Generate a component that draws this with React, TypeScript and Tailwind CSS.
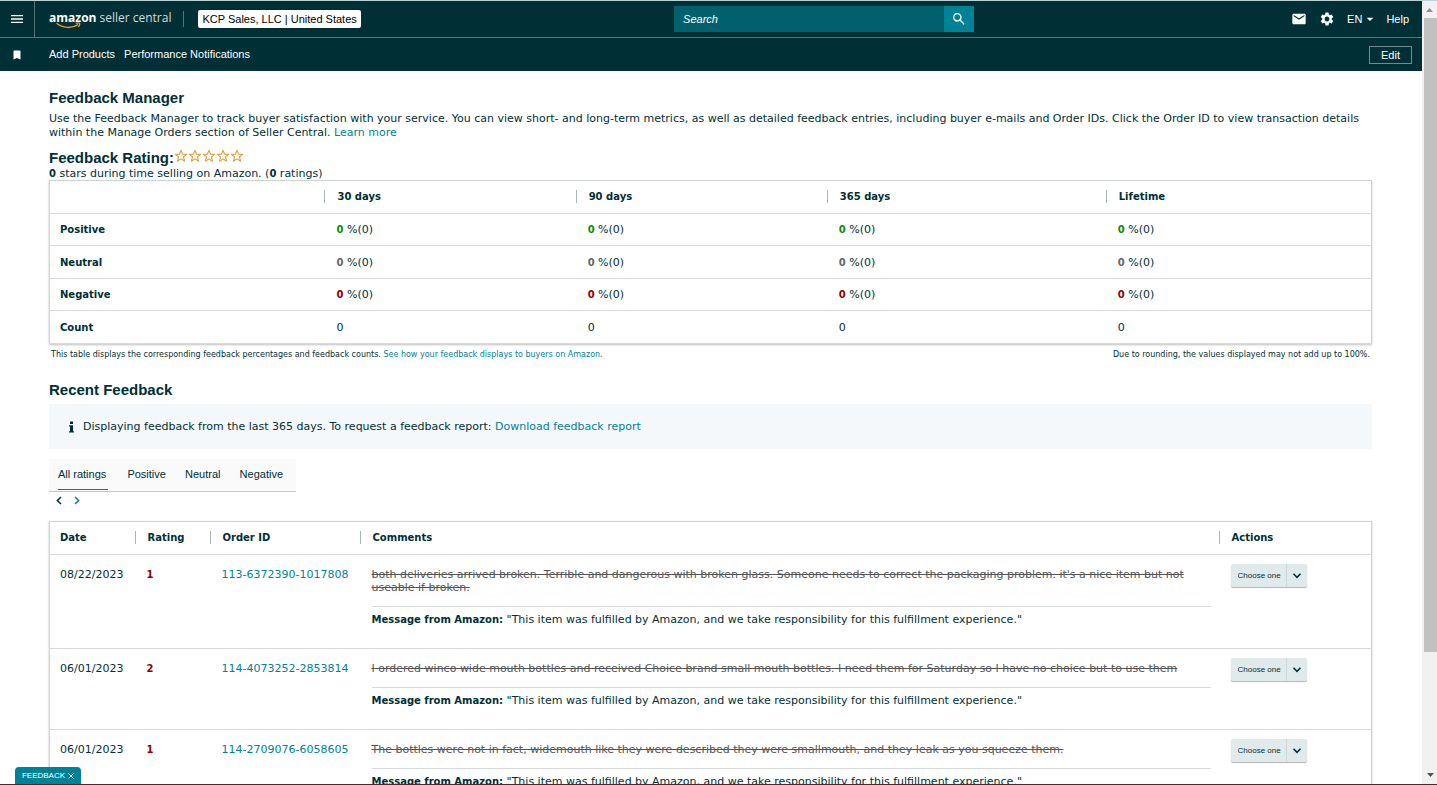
import { MdArrowDropDown, MdBookmark, MdEmail, MdMenu, MdSearch, MdSettings } from "react-icons/md";


type RatingRow = {
    label: string;
    color?: string;
};

type FeedbackEntry = {
    id: string;
    date: string;
    rating: number;
    comment: string;
};


const periods = ["30 days", "90 days", "365 days", "Lifetime"];

const ratingRows: RatingRow[] = [
    { label: "Positive", color: "text-[#0a8a0a]" },
    { label: "Neutral", color: "text-[#666666]" },
    { label: "Negative", color: "text-[#900000]" },
    { label: "Count" },
];

const tabs = ["All ratings", "Positive", "Neutral", "Negative"];

const entries: FeedbackEntry[] = [
    {
        id: "113-6372390-1017808",
        date: "08/22/2023",
        rating: 1,
        comment: "both deliveries arrived broken. Terrible and dangerous with broken glass. Someone needs to correct the packaging problem. it's a nice item but not useable if broken.",
    },
    {
        id: "114-4073252-2853814",
        date: "06/01/2023",
        rating: 2,
        comment: "I ordered winco wide mouth bottles and received Choice brand small mouth bottles. I need them for Saturday so I have no choice but to use them",
    },
    {
        id: "114-2709076-6058605",
        date: "06/01/2023",
        rating: 1,
        comment: "The bottles were not in fact, widemouth like they were described they were smallmouth, and they leak as you squeeze them.",
    },
];


const Logo = () => (
    <a href="#" className="relative flex h-5 items-start gap-[3px] font-['Open_Sans',sans-serif] text-[12px] leading-[18px] whitespace-nowrap text-white">
        <span className="font-bold">amazon</span>
        <span className="text-[#d5dddd]">seller central</span>
        <svg viewBox="0 0 26 7" className="absolute top-[13px] left-[7px] h-[7px] w-[25px]" fill="none" stroke="#e8962e" strokeWidth="1.4">
            <path d="M0.5 1.2C7 6.4 16 7 23 2.6" />
            <path d="M20.5 1.2C22.5 0.6 24.2 0.8 24.5 1.2C24.8 1.8 24.3 3.6 23.3 5" />
        </svg>
    </a>
);

const Header = () => (
    <header className="shrink-0 bg-[#002f36] text-[11px] text-white">
        <div className="flex h-[37px] items-center border-b border-[#587377]">
            <button aria-label="Menu" className="flex h-full w-[35px] shrink-0 items-center justify-center border-r border-[#587377]">
                <MdMenu className="size-4" />
            </button>
            <div className="flex min-w-0 flex-1 items-center pl-[14px]">
                <Logo />
                <span className="ml-3 h-4 w-px bg-[#587377]" />
                <button className="ml-[14px] h-[18px] rounded-xs bg-white px-1 whitespace-nowrap text-black">
                    KCP Sales, LLC | United States
                </button>
            </div>
            <form className="flex h-[26px] w-[300px] shrink-0">
                <input
                    aria-label="Search"
                    placeholder="Search"
                    className="min-w-0 flex-1 bg-[#00606d] px-[9px] italic placeholder:text-white"
                />
                <button type="button" aria-label="Submit search" className="flex w-[30px] items-center justify-center bg-[#008296]">
                    <MdSearch className="size-4" />
                </button>
            </form>
            <div className="flex w-[31.5%] items-center justify-end pr-[13px]">
                <button aria-label="Messages"><MdEmail className="size-4" /></button>
                <button aria-label="Settings" className="ml-3"><MdSettings className="size-4" /></button>
                <button className="ml-3 flex items-center">
                    EN <MdArrowDropDown className="size-4" />
                </button>
                <a href="#" className="ml-2">Help</a>
            </div>
        </div>
        <nav className="flex h-[33px] items-center pr-[10px]">
            <MdBookmark className="mx-[11px] size-3" />
            <a href="#" className="ml-[15px]">Add Products</a>
            <a href="#" className="ml-[9px]">Performance Notifications</a>
            <button className="ml-auto h-[18px] w-[43px] border border-[#708a8d]">Edit</button>
        </nav>
    </header>
);

const Stars = () => (
    <span className="flex" role="img" aria-label="0 out of 5 stars">
        {[1, 2, 3, 4, 5].map(star => (
            <svg key={star} viewBox="0 0 14 14" className="size-[14px]" fill="#fffaf0" stroke="#d9a34a" strokeWidth="1.1" strokeLinejoin="round">
                <path d="M7 1.3L8.6 5.2L12.7 5.4L9.5 8L10.6 12.2L7 9.9L3.4 12.2L4.5 8L1.3 5.4L5.4 5.2Z" />
            </svg>
        ))}
    </span>
);

// short rule drawn on the left of every header cell but the first
const HeadCell = ({ children, className = "" }: { children: string; className?: string }) => (
    <th scope="col" className={`p-0 pb-[2px] text-left text-[10px] font-bold ${className}`}>
        <div className="border-l border-[#aab7b8] pl-3">{children}</div>
    </th>
);

const RatingTable = () => (
    <table className="w-full table-fixed border-collapse border border-[#cdd3d3] leading-[13px] shadow-[0_1px_2px_rgba(0,0,0,0.25)]">
        <thead>
            <tr className="h-[33px] border-b border-[#d5dbdb]">
                <td className="w-[20.8%]" />
                {periods.map(period => (
                    <HeadCell key={period} className={period === "365 days" ? "w-[21.1%]" : period === "Lifetime" ? "" : "w-[19%]"}>
                        {period}
                    </HeadCell>
                ))}
            </tr>
        </thead>
        <tbody>
            {ratingRows.map(row => (
                <tr key={row.label} className="h-[32px] border-b border-[#d5dbdb] even:h-[33px]">
                    <th scope="row" className="pl-[10px] text-left text-[10px] font-bold">{row.label}</th>
                    {periods.map(period => (
                        <td key={period} className="pl-3">
                            {row.color ? <><b className={`text-[10px] ${row.color}`}>0</b> %(0)</> : "0"}
                        </td>
                    ))}
                </tr>
            ))}
        </tbody>
    </table>
);

const ActionSelect = ({ id }: { id: string }) => (
    <div className="relative h-[23px] w-[76px] rounded-xs bg-[#e0eaea] shadow-[0_1px_1px_rgba(0,0,0,0.3)]">
        <select
            aria-label={`Action for order ${id}`}
            className="h-full w-full appearance-none pl-[7px] font-['Liberation_Sans',Arial,sans-serif] text-[8px] font-normal"
        >
            <option>Choose one</option>
        </select>
        <span className="pointer-events-none absolute inset-y-0 right-0 flex w-[21px] items-center justify-center border-l border-[#cddada]">
            <svg viewBox="0 0 10 6" className="h-[6px] w-[10px]" fill="none" stroke="#002f36" strokeWidth="1.6">
                <path d="M1.5 0.8L5 4.3L8.5 0.8" />
            </svg>
        </span>
    </div>
);

const FeedbackTable = () => (
    <table className="w-full table-fixed border-collapse border border-[#cdd3d3] leading-[13px] shadow-[0_1px_2px_rgba(0,0,0,0.25)]">
        <thead>
            <tr className="h-[33px] border-b border-[#d5dbdb]">
                <th scope="col" className="w-[85px] pb-[2px] pl-[10px] text-left text-[10px] font-bold">Date</th>
                <HeadCell className="w-[75px]">Rating</HeadCell>
                <HeadCell className="w-[150px]">Order ID</HeadCell>
                <HeadCell>Comments</HeadCell>
                <HeadCell className="w-[153px]">Actions</HeadCell>
            </tr>
        </thead>
        <tbody>
            {entries.map(entry => (
                <tr key={entry.id} className="border-b border-[#d5dbdb] align-top">
                    <td className="pt-[13px] pl-[10px]">{entry.date}</td>
                    <td className="pt-[13px] pl-3 text-[10px] font-bold text-[#900000]">{entry.rating}</td>
                    <td className="pt-[13px] pl-3">
                        <a href="#" className="text-[#008296]">{entry.id}</a>
                    </td>
                    <td className="pt-[13px] pr-2 pb-[22px] pl-3">
                        <p className="border-b border-[#d5dbdb] pb-3 text-[#555555] line-through">{entry.comment}</p>
                        <p className="pt-[6px]">
                            <b className="text-[10px]">Message from Amazon:</b> "This item was fulfilled by Amazon, and we take responsibility for this fulfillment experience."
                        </p>
                    </td>
                    <td className="pt-[9px] pl-3"><ActionSelect id={entry.id} /></td>
                </tr>
            ))}
        </tbody>
    </table>
);

const Scrollbar = () => (
    <div aria-hidden="true" className="flex w-[15px] shrink-0 flex-col items-center bg-[#f1f1f1]">
        <svg viewBox="0 0 15 17" className="h-[17px] w-[15px]"><path d="M4 11L7.5 7L11 11Z" fill="#8f8f8f" /></svg>
        <div className="ml-[2px] h-[81%] w-[13px] bg-[#c1c1c1]" />
        <svg viewBox="0 0 15 17" className="mt-auto h-[17px] w-[15px]"><path d="M5 6L8.5 10L12 6Z" fill="#505050" /></svg>
    </div>
);

const App = () => (
    <div className="flex h-screen overflow-hidden border-t border-b border-t-[#b9d3d6] border-b-[#333333] bg-white font-['Liberation_Sans',Arial,sans-serif] text-[#002f36]">
        <div className="relative flex min-w-0 flex-1 flex-col overflow-hidden">
            <Header />
            <main className="min-h-0 flex-1 overflow-hidden px-[50px] pt-[18px] pl-[49px] font-['DejaVu_Sans',Verdana,sans-serif] text-[11px] leading-[14px]">
                <h1 className="font-['Liberation_Sans',Arial,sans-serif] text-[15px] leading-[18px] font-bold">Feedback Manager</h1>
                <p className="mt-[5px]">
                    Use the Feedback Manager to track buyer satisfaction with your service. You can view short- and long-term metrics, as well as detailed feedback entries, including buyer e-mails and Order IDs. Click the Order ID to view transaction details within the Manage Orders section of Seller Central. <a href="#" className="text-[#008296]">Learn more</a>
                </p>
                <div className="mt-[9px] flex items-start">
                    <h2 className="font-['Liberation_Sans',Arial,sans-serif] text-[15px] leading-[18px] font-bold">Feedback Rating:</h2>
                    <Stars />
                </div>
                <p className="leading-[13px]">
                    <b className="text-[10px]">0</b> stars during time selling on Amazon. (<b className="text-[10px]">0</b> ratings)
                </p>
                <RatingTable />
                <div className="mt-[5px] flex justify-between px-[2px] text-[8px] leading-[12px]">
                    <p>
                        This table displays the corresponding feedback percentages and feedback counts. <a href="#" className="text-[#008296]">See how your feedback displays to buyers on Amazon.</a>
                    </p>
                    <p>Due to rounding, the values displayed may not add up to 100%.</p>
                </div>
                <h2 className="mt-5 font-['Liberation_Sans',Arial,sans-serif] text-[15px] leading-[18px] font-bold">Recent Feedback</h2>
                <div className="mt-[5px] flex h-[45px] items-center bg-[#f4f8fa] pl-[19px]">
                    <svg viewBox="0 0 6 12" className="mr-[9px] h-3 w-[6px]" fill="#002f36">
                        <path d="M2 0.5H5V3H2ZM1 4.3H5V10.2H6V11.5H1V10.2H2V5.5H1Z" />
                    </svg>
                    <p>
                        Displaying feedback from the last 365 days. To request a feedback report: <a href="#" className="text-[#008296]">Download feedback report</a>
                    </p>
                </div>
                <div role="tablist" className="mt-[10px] flex h-[33px] w-[247px] justify-between border-b border-[#c4c8c8] bg-[#fafafa] pr-[13px] pl-[9px] font-['Liberation_Sans',Arial,sans-serif]">
                    {tabs.map((tab, index) => (
                        <button
                            key={tab}
                            role="tab"
                            aria-selected={index === 0}
                            className={index === 0 ? "mb-px border-b border-b-[#008296] pr-[2px] whitespace-nowrap" : "mb-px border-b border-b-transparent whitespace-nowrap"}
                        >
                            {tab}
                        </button>
                    ))}
                </div>
                <div className="mt-1 mb-4 flex gap-3 pl-[7px]">
                    <button aria-label="Previous page">
                        <svg viewBox="0 0 6 9" className="h-[9px] w-[6px]" fill="none" stroke="#002f36" strokeWidth="1.5"><path d="M5 1L1.4 4.5L5 8" /></svg>
                    </button>
                    <button aria-label="Next page">
                        <svg viewBox="0 0 6 9" className="h-[9px] w-[6px]" fill="none" stroke="#008296" strokeWidth="1.5"><path d="M1 1L4.6 4.5L1 8" /></svg>
                    </button>
                </div>
                <FeedbackTable />
            </main>
            <button className="absolute bottom-0 left-[15px] flex h-[17px] w-[66px] items-center justify-center gap-[3px] rounded-t-sm bg-[#008296] text-[8px] text-white">
                FEEDBACK
                <svg viewBox="0 0 6 6" className="size-[6px]" stroke="#ffffff" strokeWidth="1"><path d="M0.5 0.5L5.5 5.5M5.5 0.5L0.5 5.5" /></svg>
            </button>
        </div>
        <Scrollbar />
    </div>
);

export default App;
